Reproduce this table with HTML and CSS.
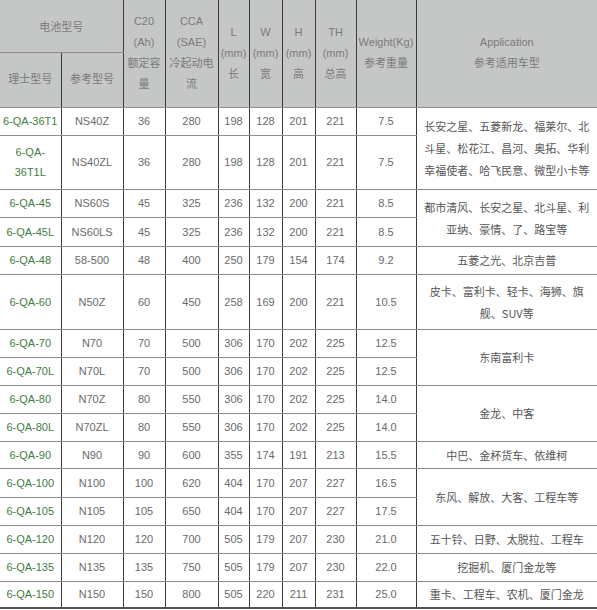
FILE: index.html
```html
<!DOCTYPE html>
<html lang="zh-CN">
<head>
<meta charset="utf-8">
<title>电池型号</title>
<link rel="stylesheet" href="styles.css">
</head>
<body>
<table class="spec">
  <colgroup>
    <col class="c-a"><col class="c-b"><col class="c-c"><col class="c-d"><col class="c-e">
    <col class="c-f"><col class="c-g"><col class="c-h"><col class="c-i"><col class="c-j">
  </colgroup>
  <thead>
    <tr class="h1">
      <th colspan="2">电池型号</th>
      <th rowspan="2">C20<br>(Ah)<br>额定容<br>量</th>
      <th rowspan="2">CCA<br>(SAE)<br>冷起动电<br>流</th>
      <th rowspan="2">L<br>(mm)<br>长</th>
      <th rowspan="2">W<br>(mm)<br>宽</th>
      <th rowspan="2">H<br>(mm)<br>高</th>
      <th rowspan="2">TH<br>(mm)<br>总高</th>
      <th rowspan="2">Weight(Kg)<br>参考重量</th>
      <th rowspan="2">Application<br>参考适用车型</th>
    </tr>
    <tr class="h2">
      <th>理士型号</th>
      <th>参考型号</th>
    </tr>
  </thead>
  <tbody>
    <tr class="r28"><td class="m">6-QA-36T1</td><td>NS40Z</td><td>36</td><td>280</td><td>198</td><td>128</td><td>201</td><td>221</td><td>7.5</td><td class="app" rowspan="2">长安之星、五菱新龙、福莱尔、北斗星、松花江、昌河、奥拓、华利幸福使者、哈飞民意、微型小卡等</td></tr>
    <tr class="r54"><td class="m">6-QA-<br>36T1L</td><td>NS40ZL</td><td>36</td><td>280</td><td>198</td><td>128</td><td>201</td><td>221</td><td>7.5</td></tr>
    <tr class="r28"><td class="m">6-QA-45</td><td>NS60S</td><td>45</td><td>325</td><td>236</td><td>132</td><td>200</td><td>221</td><td>8.5</td><td class="app" rowspan="2">都市清风、长安之星、北斗星、利亚纳、豪情、了、路宝等</td></tr>
    <tr class="r29"><td class="m">6-QA-45L</td><td>NS60LS</td><td>45</td><td>325</td><td>236</td><td>132</td><td>200</td><td>221</td><td>8.5</td></tr>
    <tr class="r28"><td class="m">6-QA-48</td><td>58-500</td><td>48</td><td>400</td><td>250</td><td>179</td><td>154</td><td>174</td><td>9.2</td><td class="app">五菱之光、北京吉普</td></tr>
    <tr class="r55"><td class="m">6-QA-60</td><td>N50Z</td><td>60</td><td>450</td><td>258</td><td>169</td><td>200</td><td>221</td><td>10.5</td><td class="app">皮卡、富利卡、轻卡、海狮、旗舰、SUV等</td></tr>
    <tr class="r28"><td class="m">6-QA-70</td><td>N70</td><td>70</td><td>500</td><td>306</td><td>170</td><td>202</td><td>225</td><td>12.5</td><td class="app" rowspan="2">东南富利卡</td></tr>
    <tr class="r28"><td class="m">6-QA-70L</td><td>N70L</td><td>70</td><td>500</td><td>306</td><td>170</td><td>202</td><td>225</td><td>12.5</td></tr>
    <tr class="r28"><td class="m">6-QA-80</td><td>N70Z</td><td>80</td><td>550</td><td>306</td><td>170</td><td>202</td><td>225</td><td>14.0</td><td class="app" rowspan="2">金龙、中客</td></tr>
    <tr class="r28"><td class="m">6-QA-80L</td><td>N70ZL</td><td>80</td><td>550</td><td>306</td><td>170</td><td>202</td><td>225</td><td>14.0</td></tr>
    <tr class="r27"><td class="m">6-QA-90</td><td>N90</td><td>90</td><td>600</td><td>355</td><td>174</td><td>191</td><td>213</td><td>15.5</td><td class="app">中巴、金杯货车、依维柯</td></tr>
    <tr class="r29"><td class="m">6-QA-100</td><td>N100</td><td>100</td><td>620</td><td>404</td><td>170</td><td>207</td><td>227</td><td>16.5</td><td class="app" rowspan="2">东风、解放、大客、工程车等</td></tr>
    <tr class="r28"><td class="m">6-QA-105</td><td>N105</td><td>105</td><td>650</td><td>404</td><td>170</td><td>207</td><td>227</td><td>17.5</td></tr>
    <tr class="r28"><td class="m">6-QA-120</td><td>N120</td><td>120</td><td>700</td><td>505</td><td>179</td><td>207</td><td>230</td><td>21.0</td><td class="app">五十铃、日野、太脱拉、工程车</td></tr>
    <tr class="r28"><td class="m">6-QA-135</td><td>N135</td><td>135</td><td>750</td><td>505</td><td>179</td><td>207</td><td>230</td><td>22.0</td><td class="app">挖掘机、厦门金龙等</td></tr>
    <tr class="r27 last"><td class="m">6-QA-150</td><td>N150</td><td>150</td><td>800</td><td>505</td><td>220</td><td>211</td><td>231</td><td>25.0</td><td class="app">重卡、工程车、农机、厦门金龙</td></tr>
  </tbody>
</table>
</body>
</html>
```

FILE: styles.css
```css
html, body {
  margin: 0;
  padding: 0;
  background: #ffffff;
}

.spec {
  width: 597px;
  table-layout: fixed;
  border-collapse: collapse;
  font-family: "Liberation Sans", Arial, "Noto Sans CJK SC", sans-serif;
  font-size: 11px;
  color: #6a6a6a;
}

.c-a { width: 61px; }
.c-b { width: 62px; }
.c-c { width: 42px; }
.c-d { width: 53px; }
.c-e { width: 31px; }
.c-f { width: 33px; }
.c-g { width: 33px; }
.c-h { width: 41px; }
.c-i { width: 60px; }
.c-j { width: 181px; }

.spec th,
.spec td {
  padding: 0 1px;
  text-align: center;
  vertical-align: middle;
  border-left: 1px solid #3a3a3a;
  border-right: 1px solid #3a3a3a;
  border-top: 1px solid #8c8c8c;
  border-bottom: 1px solid #8c8c8c;
  overflow: visible;
  white-space: normal;
  word-break: normal;
}

.spec tr > :first-child { border-left: none; }
.spec tr > :last-child { border-right: none; }
.spec thead tr.h2 > :last-child { border-right: 1px solid #3a3a3a; }
.spec thead tr.h2 > :first-child { border-left: none; }

.spec thead th {
  background: #c5c7c6;
  color: #7a7a7a;
  font-weight: normal;
  line-height: 21px;
  border-top: none;
}
.spec thead tr.h1 th:first-child { padding-top: 4px; }
.spec thead tr.h2 th { border-top: 1px solid #555; }

.spec thead tr.h1 { height: 52px; }
.spec thead tr.h2 { height: 55px; }

.spec tbody td { line-height: 20px; }

.spec td.m { color: #3f7d3f; }

.spec td.app {
  font-size: 11px;
  line-height: 22px;
  color: #555;
  padding: 0 4px;
  font-family: "Noto Sans CJK SC", "Liberation Sans", sans-serif;
}

.r27 { height: 27px; }
.r28 { height: 28px; }
.r29 { height: 29px; }
.r54 { height: 54px; }
.r55 { height: 55px; }

.spec tbody tr.last td { border-bottom: 2px solid #555; }
```
